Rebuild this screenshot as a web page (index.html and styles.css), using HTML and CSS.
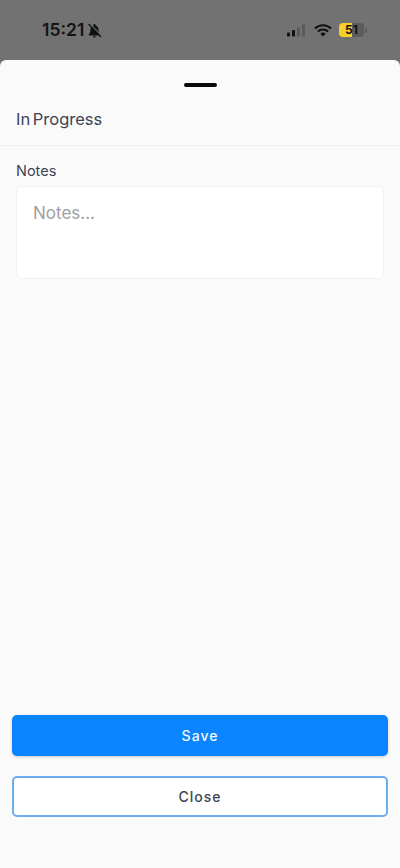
FILE: index.html
```html
<!DOCTYPE html>
<html lang="en">
<head>
  <meta charset="UTF-8">
  <meta name="viewport" content="width=device-width, initial-scale=1.0">
  <title>In Progress</title>
  <link rel="stylesheet" href="styles.css">
</head>
<body>
  <div class="status-bar">
    <div class="status-left">
      <span class="clock">15:21</span>
      <svg class="bell" width="15" height="15" viewBox="0 0 15 15">
        <path d="M7.500 1c-.6 0-1 .4-1 1v.4C4.600 2.900 3.500 4.500 3.500 6.500c0 2.500-.6 3.800-1.800 5-.3.400 0 .9.400.9h10.800c.4 0 .7-.5.400-.9-1.200-1.200-1.800-2.500-1.800-5 0-2-1.100-3.600-3-4.100V2c0-.6-.4-1-1-1z" fill="#111"/>
        <path d="M6 13.200h3c0 .8-.7 1.300-1.500 1.300S6 14 6 13.200z" fill="#111"/>
        <path d="M2.800 .8l12 12.500" stroke="#727272" stroke-width="1.400"/>
        <path d="M1.500 1l12.500 13" stroke="#111" stroke-width="1.300"/>
      </svg>
    </div>
    <div class="status-right">
      <svg width="20" height="13" viewBox="0 0 20 13">
        <rect x="0" y="8.500" width="3" height="4" rx=".8" fill="#111"/>
        <rect x="5" y="6" width="3" height="6.500" rx=".8" fill="#111"/>
        <rect x="10" y="3.200" width="3" height="9.300" rx=".8" fill="#5a5a5a"/>
        <rect x="15" y=".5" width="3" height="12" rx=".8" fill="#5a5a5a"/>
      </svg>
      <svg class="wifi" width="18" height="13" viewBox="0 0 18 13">
        <path d="M1 4.500a11.500 11.500 0 0 1 16 0" fill="none" stroke="#111" stroke-width="2"/>
        <path d="M3.900 7.500a7.300 7.300 0 0 1 10.200 0" fill="none" stroke="#111" stroke-width="2"/>
        <path d="M9 12.500l-2.700-2.800a3.900 3.900 0 0 1 5.400 0z" fill="#111"/>
      </svg>
      <div class="battery">
        <div class="battery-fill"></div>
        <span class="battery-level">51</span>
      </div>
      <div class="battery-cap"></div>
    </div>
  </div>

  <div class="sheet">
    <div class="handle-row">
      <div class="handle"></div>
    </div>
    <div class="sheet-title">In Progress</div>
    <div class="sheet-body">
      <label class="field-label" for="notes">Notes</label>
      <textarea id="notes" class="notes-input" placeholder="Notes..."></textarea>
    </div>
    <div class="sheet-actions">
      <button class="btn btn-save">Save</button>
      <button class="btn btn-close">Close</button>
    </div>
  </div>
</body>
</html>
```

FILE: styles.css
```css
* {
  box-sizing: border-box;
}

html, body {
  height: 100%;
}

body {
  margin: 0;
  display: flex;
  flex-direction: column;
  background-color: #727272;
  font-family: Inter, "Noto Sans", sans-serif;
  overflow: hidden;
}

.status-bar {
  height: 60px;
  flex-shrink: 0;
  display: flex;
  justify-content: space-between;
  align-items: flex-start;
  padding: 20px 33px 0 42px;
}

.status-left {
  display: flex;
  align-items: center;
  gap: 3px;
}

.clock {
  font-size: 17.5px;
  line-height: 20px;
  font-weight: 600;
  color: #141414;
}

.status-right {
  display: flex;
  align-items: center;
  margin-top: 3px;
}

.wifi {
  margin-left: 7px;
}

.battery {
  position: relative;
  width: 25px;
  height: 14px;
  margin-left: 7px;
  border-radius: 4px;
  background-color: #5c5c5c;
  overflow: hidden;
}

.battery-fill {
  width: 13px;
  height: 100%;
  background-color: #f7cf2b;
}

.battery-level {
  position: absolute;
  top: 0;
  left: 0;
  width: 100%;
  text-align: center;
  font-size: 12px;
  line-height: 14px;
  font-weight: 700;
  color: #111;
}

.battery-cap {
  width: 2px;
  height: 5px;
  margin-left: 1px;
  border-radius: 0 2px 2px 0;
  background-color: #5c5c5c;
}

.sheet {
  flex: 1;
  display: flex;
  flex-direction: column;
  background-color: #fafafa;
  border-radius: 6px 6px 0 0;
}

.handle-row {
  display: flex;
  justify-content: center;
  padding-top: 23px;
}

.handle {
  width: 33px;
  height: 4px;
  border-radius: 2px;
  background-color: #0a0a0a;
}

.sheet-title {
  margin-top: 20px;
  padding: 0 16px 14px;
  border-bottom: 1px solid #f1f1f1;
  font-size: 16.5px;
  line-height: 24px;
  word-spacing: -2px;
  color: #3d4454;
}

.sheet-body {
  flex: 1;
  padding: 15px 16px 0;
}

.field-label {
  display: block;
  font-size: 14.5px;
  line-height: 20px;
  color: #3d4454;
}

.notes-input {
  display: block;
  width: 100%;
  height: 93px;
  margin-top: 5px;
  padding: 15px 16px;
  border: 1px solid #f2f2f2;
  border-radius: 5px;
  background-color: #fff;
  font-family: inherit;
  font-size: 17px;
  line-height: 22px;
  resize: none;
  outline: none;
}

.notes-input::placeholder {
  color: #a0a0a0;
}

.sheet-actions {
  display: flex;
  flex-direction: column;
  gap: 20px;
  padding: 0 12px 51px;
}

.btn {
  height: 41px;
  border-radius: 5px;
  font-family: inherit;
  font-size: 14px;
  font-weight: 500;
  letter-spacing: 1px;
}

.btn-save {
  border: none;
  background-color: #0a84ff;
  color: #f4f8ff;
  box-shadow: 0 1px 3px rgba(0, 0, 0, 0.2);
}

.btn-close {
  border: 2px solid #6aaef0;
  background-color: #fff;
  color: #3d4454;
}
```
